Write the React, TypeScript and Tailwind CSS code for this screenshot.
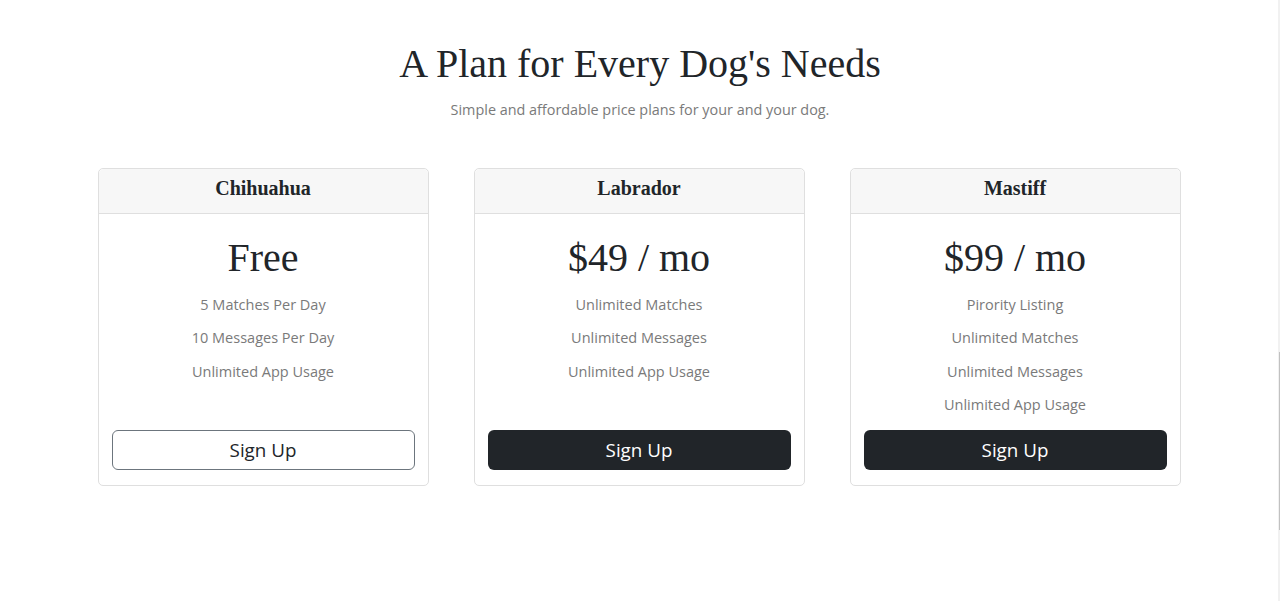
import React from "react";

const sans = { fontFamily: '"Open Sans", "Liberation Sans", sans-serif' };

type Plan = {
  name: string;
  price: string;
  features: string[];
  dark: boolean;
};

const plans: Plan[] = [
  {
    name: "Chihuahua",
    price: "Free",
    features: ["5 Matches Per Day", "10 Messages Per Day", "Unlimited App Usage"],
    dark: false,
  },
  {
    name: "Labrador",
    price: "$49 / mo",
    features: ["Unlimited Matches", "Unlimited Messages", "Unlimited App Usage"],
    dark: true,
  },
  {
    name: "Mastiff",
    price: "$99 / mo",
    features: [
      "Pirority Listing",
      "Unlimited Matches",
      "Unlimited Messages",
      "Unlimited App Usage",
    ],
    dark: true,
  },
];

function Card({ plan }: { plan: Plan }) {
  return (
    <div className="flex w-[331px] flex-col rounded-[5px] border border-[#dfdfdf] bg-white">
      <div className="flex h-[45px] items-center justify-center rounded-t-[5px] border-b border-[#dfdfdf] bg-[#f7f7f7] pb-[6px]">
        <h3 className="font-['Liberation_Serif',serif] text-[20px] font-bold leading-[30px] text-[#212529]">
          {plan.name}
        </h3>
      </div>
      <div className="flex flex-1 flex-col items-center px-[13px] pb-[15px] pt-[20px]">
        <div className="font-['Liberation_Serif',serif] text-[40px] leading-[48px] text-[#212529]">
          {plan.price}
        </div>
        <ul className="mb-[3px] mt-[12px] flex flex-col items-center">
          {plan.features.map((f) => (
            <li
              key={f}
              style={sans}
              className="h-[33.3px] text-[14.5px] leading-[22px] text-[#7a7a7a]"
            >
              {f}
            </li>
          ))}
        </ul>
        <button
          style={sans}
          className={
            "mt-auto h-[40px] w-full rounded-[6px] text-[18.8px] " +
            (plan.dark
              ? "bg-[#212529] text-white"
              : "border border-[#6c757d] bg-white text-[#212529]")
          }
        >
          Sign Up
        </button>
      </div>
    </div>
  );
}

export default function App() {
  return (
    <div className="relative min-h-[601px] w-full bg-white">
      <div className="flex flex-col items-center pt-[40px]">
        <h1 className="font-['Liberation_Serif',serif] text-[40px] leading-[48px] text-[#212529]">
          A Plan for Every Dog's Needs
        </h1>
        <p style={sans} className="mt-[10px] text-[14.4px] leading-[24px] text-[#7a7a7a]">
          Simple and affordable price plans for your and your dog.
        </p>
      </div>
      <div className="mt-[46px] flex justify-center gap-[45px] pr-[2px]">
        {plans.map((p) => (
          <Card key={p.name} plan={p} />
        ))}
      </div>
      <div className="absolute right-0 top-0 h-[601px] w-[2px] bg-[#f1f1f1]">
        <div className="absolute right-0 top-[352px] h-[178px] w-[1px] bg-[#c1c1c1]" />
      </div>
    </div>
  );
}
